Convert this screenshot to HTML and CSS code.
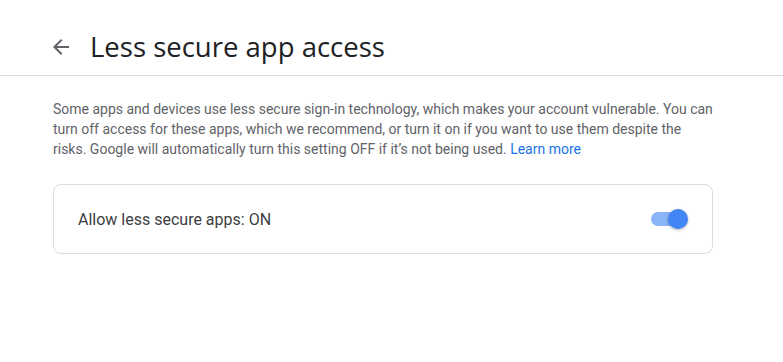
FILE: index.html
```html
<!DOCTYPE html>
<html>
<head>
<meta charset="utf-8">
<link rel="stylesheet" href="styles.css">
</head>
<body>
<header class="header">
  <svg class="back" width="24" height="24" viewBox="0 0 24 24"><path d="M20 11H7.83l5.59-5.59L12 4l-8 8 8 8 1.41-1.41L7.83 13H20v-2z" fill="#5f6368"/></svg>
  <h1 class="title">Less secure app access</h1>
</header>
<main class="content">
  <p class="desc">Some apps and devices use less secure sign-in technology, which makes your account vulnerable. You can turn off access for these apps, which we recommend, or turn it on if you want to use them despite the risks. Google will automatically turn this setting OFF if it’s not being used. <a class="link" href="#">Learn more</a></p>
  <div class="card">
    <span class="label">Allow less secure apps: ON</span>
    <span class="switch"><span class="track"></span><span class="thumb"></span></span>
  </div>
</main>
</body>
</html>
```
FILE: styles.css
```css
html, body { margin: 0; padding: 0; background: #fff; }
body { font-family: Roboto, "Noto Sans", Arial, sans-serif; width: 783px; height: 362px; overflow: hidden; }
.header {
  height: 76px;
  border-bottom: 1px solid #dadce0;
  display: flex;
  align-items: center;
  padding: 19px 0 0 49px;
  box-sizing: border-box;
}
.back { display: block; margin-right: 17px; }
.title {
  margin: 0;
  font-family: "Open Sans", Roboto, sans-serif;
  font-weight: 400;
  font-size: 27.5px;
  line-height: 36px;
  color: #202124;
  letter-spacing: 0;
}
.content { padding: 23px 0 0 53px; width: 660px; }
.desc {
  margin: 0;
  font-size: 14px;
  line-height: 20px;
  color: #5f6368;
}
.link { color: #1a73e8; text-decoration: none; }
.card {
  margin-top: 25px;
  height: 70px;
  box-sizing: border-box;
  border: 1px solid #dadce0;
  border-radius: 8px;
  display: flex;
  align-items: center;
  justify-content: space-between;
  padding: 0 24px 0 24px;
}
.label { font-size: 16px; color: #3c4043; }
.switch { position: relative; width: 37px; height: 20px; }
.track {
  position: absolute; left: 0; top: 3px; width: 34px; height: 14px;
  border-radius: 7px; background: #8ab4f8;
}
.thumb {
  position: absolute; right: 0; top: 0; width: 20px; height: 20px;
  border-radius: 50%; background: #4285f4;
  box-shadow: 0 1px 3px rgba(0,0,0,0.3);
}
```
